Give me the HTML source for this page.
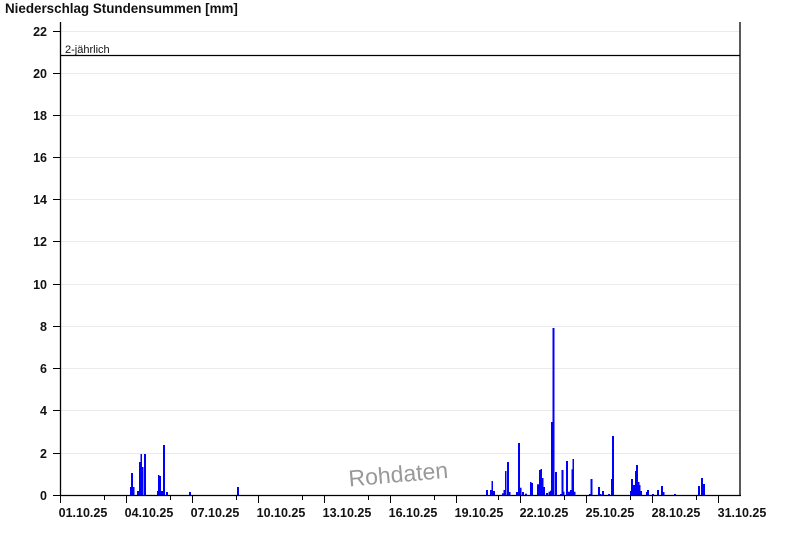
<!DOCTYPE html>
<html><head><meta charset="utf-8"><style>
html,body{margin:0;padding:0;background:#fff;width:800px;height:550px;overflow:hidden}
svg{display:block;font-family:"Liberation Sans",Arial,sans-serif}
</style></head><body>
<svg width="800" height="550" viewBox="0 0 800 550" xmlns="http://www.w3.org/2000/svg">
<text x="5" y="13" font-size="13.4" font-weight="bold" fill="#111">Niederschlag Stundensummen [mm]</text>
<g stroke="#ebebeb" stroke-width="1">
<line x1="61" x2="740" y1="31.5" y2="31.5"/><line x1="61" x2="740" y1="73.5" y2="73.5"/>
<line x1="61" x2="740" y1="115.5" y2="115.5"/><line x1="61" x2="740" y1="157.5" y2="157.5"/>
<line x1="61" x2="740" y1="199.5" y2="199.5"/><line x1="61" x2="740" y1="241.5" y2="241.5"/>
<line x1="61" x2="740" y1="284.5" y2="284.5"/><line x1="61" x2="740" y1="326.5" y2="326.5"/>
<line x1="61" x2="740" y1="368.5" y2="368.5"/><line x1="61" x2="740" y1="410.5" y2="410.5"/>
<line x1="61" x2="740" y1="453.5" y2="453.5"/>
</g>
<text x="349" y="483" font-size="23" fill="#fff" transform="rotate(-5 400 470)">Rohdaten</text>
<text x="348" y="482" font-size="23" fill="#999" transform="rotate(-5 400 470)">Rohdaten</text>
<g fill="#0000ff">
<rect x="130" y="487" width="1" height="8"/><rect x="131" y="473" width="2" height="22"/><rect x="133" y="487" width="1.5" height="8"/>
<rect x="137" y="491" width="2" height="4"/><rect x="139" y="462" width="1.5" height="33"/><rect x="140.5" y="454" width="1.5" height="41"/><rect x="142" y="467" width="1.5" height="28"/>
<rect x="144" y="454" width="2" height="41"/><rect x="157" y="491" width="1" height="4"/><rect x="158" y="475" width="1.5" height="20"/><rect x="159.5" y="476" width="1.5" height="19"/><rect x="161" y="491" width="2" height="4"/>
<rect x="163" y="445" width="2" height="50"/><rect x="166" y="492" width="2" height="3"/><rect x="189" y="492" width="2" height="3"/><rect x="237" y="487" width="2" height="8"/>
<rect x="486" y="490" width="2" height="5"/><rect x="490" y="490" width="1.5" height="5"/><rect x="491.5" y="481" width="1.5" height="14"/><rect x="493" y="491" width="2" height="4"/>
<rect x="502" y="493.3" width="1.5" height="1.7"/><rect x="503.5" y="490" width="1.5" height="5"/><rect x="505" y="471" width="1.5" height="24"/><rect x="507" y="462" width="2" height="33"/><rect x="509" y="492" width="1.5" height="3"/>
<rect x="516" y="492" width="2" height="3"/><rect x="518" y="443" width="2" height="52"/><rect x="520" y="487.7" width="1.5" height="7.3"/><rect x="522" y="492" width="2" height="3"/><rect x="525" y="493.7" width="2" height="1.3"/>
<rect x="530" y="482" width="1.5" height="13"/><rect x="531.5" y="483" width="1.5" height="12"/><rect x="537" y="484.3" width="2" height="10.7"/><rect x="539" y="470" width="1.5" height="25"/><rect x="540.5" y="469" width="1.5" height="26"/>
<rect x="542" y="478" width="1.5" height="17"/><rect x="543.5" y="487" width="1.5" height="8"/><rect x="546" y="493" width="2" height="2"/><rect x="548.5" y="491.7" width="1.5" height="3.3"/><rect x="550" y="490.7" width="1.5" height="4.3"/>
<rect x="551" y="422" width="1.5" height="73"/><rect x="552.5" y="328" width="2" height="167"/><rect x="555" y="472" width="2" height="23"/><rect x="560" y="494" width="1.5" height="1"/><rect x="561.5" y="470" width="2" height="25"/><rect x="563" y="491.7" width="1.5" height="3.3"/>
<rect x="566" y="461" width="2" height="34"/><rect x="568" y="491.7" width="2" height="3.3"/><rect x="570" y="490" width="1.5" height="5"/><rect x="571.5" y="469.3" width="1.5" height="25.7"/><rect x="572.5" y="459" width="1.5" height="36"/><rect x="574" y="491.7" width="1.5" height="3.3"/>
<rect x="589" y="494" width="1.5" height="1"/><rect x="590.5" y="479" width="2" height="16"/><rect x="598" y="487" width="2" height="8"/><rect x="600" y="494" width="1.5" height="1"/><rect x="602" y="491" width="2" height="4"/>
<rect x="608" y="494" width="2" height="1"/><rect x="611" y="479" width="1.5" height="16"/><rect x="612" y="436" width="2" height="59"/>
<rect x="630" y="491" width="1.5" height="4"/><rect x="631" y="479" width="2" height="16"/><rect x="633" y="485" width="2" height="10"/><rect x="635" y="471" width="1.5" height="24"/><rect x="636" y="465" width="2" height="30"/><rect x="638" y="482" width="1.5" height="13"/><rect x="639" y="485" width="1.5" height="10"/><rect x="640.5" y="491" width="1.5" height="4"/>
<rect x="646" y="492" width="1.5" height="3"/><rect x="647" y="490" width="2" height="5"/><rect x="652" y="494" width="2" height="1"/><rect x="657" y="490" width="2" height="5"/><rect x="661" y="486" width="2" height="9"/><rect x="663" y="492" width="1.5" height="3"/><rect x="674" y="494" width="2" height="1"/>
<rect x="698" y="486" width="2" height="9"/><rect x="701" y="478" width="2" height="17"/><rect x="703" y="484" width="2" height="11"/>
</g>
<line x1="61" x2="740" y1="55.5" y2="55.5" stroke="#000" stroke-width="1.3"/>
<text x="65" y="53" font-size="11" fill="#111">2-jährlich</text>
<g stroke="#000" stroke-width="1.3" fill="none">
<line x1="60.5" y1="22" x2="60.5" y2="496"/>
<line x1="740" y1="22" x2="740" y2="496"/>
<line x1="60" y1="495.5" x2="741" y2="495.5"/>
</g>
<g stroke="#000" stroke-width="1">
<line x1="53" x2="60" y1="31.5" y2="31.5"/><line x1="53" x2="60" y1="73.5" y2="73.5"/><line x1="53" x2="60" y1="115.5" y2="115.5"/><line x1="53" x2="60" y1="157.5" y2="157.5"/><line x1="53" x2="60" y1="199.5" y2="199.5"/><line x1="53" x2="60" y1="241.5" y2="241.5"/><line x1="53" x2="60" y1="284.5" y2="284.5"/><line x1="53" x2="60" y1="326.5" y2="326.5"/><line x1="53" x2="60" y1="368.5" y2="368.5"/><line x1="53" x2="60" y1="410.5" y2="410.5"/><line x1="53" x2="60" y1="453.5" y2="453.5"/><line x1="53" x2="60" y1="495.5" y2="495.5"/>
<line x1="60.5" x2="60.5" y1="495" y2="503"/><line x1="104.5" x2="104.5" y1="495" y2="500"/><line x1="126.5" x2="126.5" y1="495" y2="503"/>
<line x1="170.5" x2="170.5" y1="495" y2="500"/><line x1="192.5" x2="192.5" y1="495" y2="503"/>
<line x1="236.5" x2="236.5" y1="495" y2="500"/><line x1="258.5" x2="258.5" y1="495" y2="503"/>
<line x1="302.5" x2="302.5" y1="495" y2="500"/><line x1="324.5" x2="324.5" y1="495" y2="503"/>
<line x1="368.5" x2="368.5" y1="495" y2="500"/><line x1="390.5" x2="390.5" y1="495" y2="503"/>
<line x1="434.5" x2="434.5" y1="495" y2="500"/><line x1="456.5" x2="456.5" y1="495" y2="503"/>
<line x1="498.5" x2="498.5" y1="495" y2="500"/><line x1="520.5" x2="520.5" y1="495" y2="503"/>
<line x1="564.5" x2="564.5" y1="495" y2="500"/><line x1="586.5" x2="586.5" y1="495" y2="503"/>
<line x1="630.5" x2="630.5" y1="495" y2="500"/><line x1="652.5" x2="652.5" y1="495" y2="503"/>
<line x1="696.5" x2="696.5" y1="495" y2="500"/><line x1="718.5" x2="718.5" y1="495" y2="503"/>
</g>
<g font-size="12.5" font-weight="bold" fill="#111" text-anchor="end">
<text x="47" y="36">22</text><text x="47" y="78">20</text><text x="47" y="120">18</text><text x="47" y="162">16</text><text x="47" y="204">14</text><text x="47" y="246">12</text><text x="47" y="289">10</text><text x="47" y="331">8</text><text x="47" y="373">6</text><text x="47" y="415">4</text><text x="47" y="458">2</text><text x="47" y="500">0</text>
</g>
<g font-size="12.5" font-weight="bold" fill="#111" text-anchor="middle">
<text x="83" y="517">01.10.25</text><text x="149" y="517">04.10.25</text><text x="215" y="517">07.10.25</text><text x="281" y="517">10.10.25</text><text x="347" y="517">13.10.25</text><text x="413" y="517">16.10.25</text><text x="479" y="517">19.10.25</text><text x="544" y="517">22.10.25</text><text x="610" y="517">25.10.25</text><text x="676" y="517">28.10.25</text><text x="742" y="517">31.10.25</text>
</g>
</svg>
</body></html>
